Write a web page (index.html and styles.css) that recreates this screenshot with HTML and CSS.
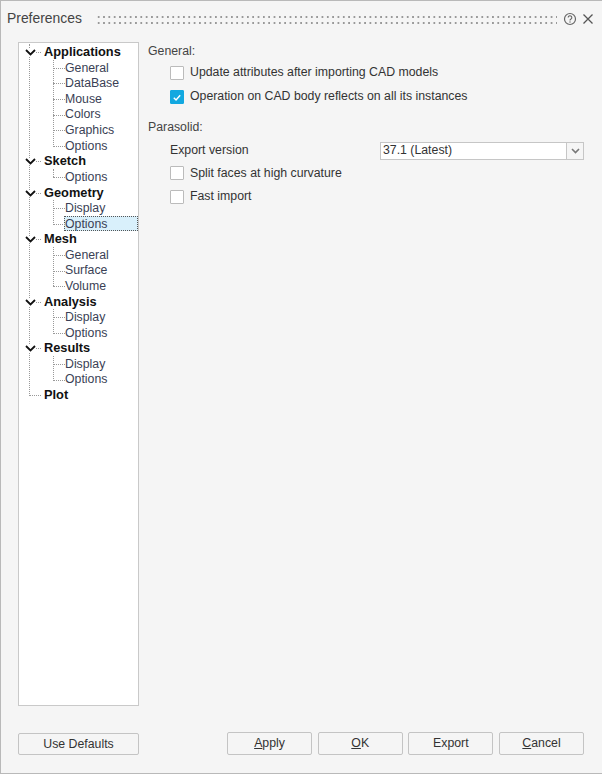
FILE: index.html
```html
<!DOCTYPE html>
<html lang="en">
<head>
<meta charset="utf-8">
<title>Preferences</title>
<link rel="stylesheet" href="styles.css">
</head>
<body>
<div class="dialog">
  <header class="titlebar">
    <span class="title">Preferences</span>
    <span class="grip"></span>
    <svg class="help" width="14" height="14" viewBox="0 0 14 14" aria-hidden="true"><circle cx="7" cy="7" r="5.5" fill="none" stroke="#666" stroke-width="1.2"/><path d="M5.2 5.6a1.8 1.8 0 1 1 2.8 1.5c-.7.4-1 .8-1 1.5" fill="none" stroke="#666" stroke-width="1.1"/><rect x="6.4" y="9.4" width="1.2" height="1.2" fill="#666"/></svg>
    <svg class="close" width="12" height="12" viewBox="0 0 12 12" aria-hidden="true"><path d="M1.5 1.5l9 9M10.5 1.5l-9 9" stroke="#555" stroke-width="1.3" fill="none"/></svg>
  </header>
  <div class="main">
    <nav class="tree">
      <ul class="roots">
        <li class="root"><svg class="chev" width="11" height="7" viewBox="0 0 11 7"><path d="M1 1l4.500 4.500L10 1" fill="none" stroke="#111" stroke-width="1.8"/></svg><span class="root-label">Applications</span>
          <ul class="kids">
            <li class="kid"><span class="kid-label">General</span></li>
            <li class="kid"><span class="kid-label">DataBase</span></li>
            <li class="kid"><span class="kid-label">Mouse</span></li>
            <li class="kid"><span class="kid-label">Colors</span></li>
            <li class="kid"><span class="kid-label">Graphics</span></li>
            <li class="kid"><span class="kid-label">Options</span></li>
          </ul>
        </li>
        <li class="root"><svg class="chev" width="11" height="7" viewBox="0 0 11 7"><path d="M1 1l4.500 4.500L10 1" fill="none" stroke="#111" stroke-width="1.8"/></svg><span class="root-label">Sketch</span>
          <ul class="kids">
            <li class="kid"><span class="kid-label">Options</span></li>
          </ul>
        </li>
        <li class="root"><svg class="chev" width="11" height="7" viewBox="0 0 11 7"><path d="M1 1l4.500 4.500L10 1" fill="none" stroke="#111" stroke-width="1.8"/></svg><span class="root-label">Geometry</span>
          <ul class="kids">
            <li class="kid"><span class="kid-label">Display</span></li>
            <li class="kid selected"><span class="kid-label">Options</span></li>
          </ul>
        </li>
        <li class="root"><svg class="chev" width="11" height="7" viewBox="0 0 11 7"><path d="M1 1l4.500 4.500L10 1" fill="none" stroke="#111" stroke-width="1.8"/></svg><span class="root-label">Mesh</span>
          <ul class="kids">
            <li class="kid"><span class="kid-label">General</span></li>
            <li class="kid"><span class="kid-label">Surface</span></li>
            <li class="kid"><span class="kid-label">Volume</span></li>
          </ul>
        </li>
        <li class="root"><svg class="chev" width="11" height="7" viewBox="0 0 11 7"><path d="M1 1l4.500 4.500L10 1" fill="none" stroke="#111" stroke-width="1.8"/></svg><span class="root-label">Analysis</span>
          <ul class="kids">
            <li class="kid"><span class="kid-label">Display</span></li>
            <li class="kid"><span class="kid-label">Options</span></li>
          </ul>
        </li>
        <li class="root"><svg class="chev" width="11" height="7" viewBox="0 0 11 7"><path d="M1 1l4.500 4.500L10 1" fill="none" stroke="#111" stroke-width="1.8"/></svg><span class="root-label">Results</span>
          <ul class="kids">
            <li class="kid"><span class="kid-label">Display</span></li>
            <li class="kid"><span class="kid-label">Options</span></li>
          </ul>
        </li>
        <li class="root leaf"><span class="root-label">Plot</span></li>
      </ul>
    </nav>
    <section class="panel">
      <h2 class="group-title">General:</h2>
      <div class="group-body">
        <label class="check"><span class="box"></span>Update attributes after importing CAD models</label>
        <label class="check"><span class="box on"><svg width="15" height="15" viewBox="0 0 15 15"><path d="M3.500 7.800l2.800 2.700 5.200-5.800" fill="none" stroke="#fff" stroke-width="1.800"/></svg></span>Operation on CAD body reflects on all its instances</label>
      </div>
      <h2 class="group-title second">Parasolid:</h2>
      <div class="group-body">
        <div class="field">
          <span class="field-label">Export version</span>
          <div class="combo"><span class="combo-value">37.1 (Latest)</span><span class="combo-btn"><svg width="9" height="6" viewBox="0 0 9 6"><path d="M1 1l3.500 3.500L8 1" fill="none" stroke="#777" stroke-width="1.600"/></svg></span></div>
        </div>
        <label class="check tight"><span class="box"></span>Split faces at high curvature</label>
        <label class="check tight"><span class="box"></span>Fast import</label>
      </div>
    </section>
  </div>
  <footer class="actions">
    <button class="btn defaults" type="button">Use Defaults</button>
    <div class="actions-right">
      <button class="btn" type="button"><u>A</u>pply</button>
      <button class="btn" type="button"><u>O</u>K</button>
      <button class="btn" type="button">Export</button>
      <button class="btn" type="button"><u>C</u>ancel</button>
    </div>
  </footer>
</div>
</body>
</html>
```
FILE: styles.css
```css
* { box-sizing: border-box; }
html, body { margin: 0; height: 100%; }
body { font: 12.300px/15.600px "Liberation Sans", Arial, sans-serif; color: #333; background: #f5f5f5; }
ul { list-style: none; margin: 0; padding: 0; }
.dialog { width: 602px; height: 774px; display: flex; flex-direction: column; border: 1px solid #b9b9b9; border-right: 0; background: #f5f5f5; }
.titlebar { height: 32px; flex: none; display: flex; align-items: center; padding: 4px 8px 0 6px; }
.title { font-size: 13.900px; color: #444; width: 89px; }
.grip { width: 461px; height: 12px; margin-top: 2px; background-image: radial-gradient(circle, #999 1px, transparent 1.400px); background-size: 5.330px 6px; background-position: 0 0; }
.help { margin-left: 6px; }
.close { margin-left: 5px; }
.main { flex: 1; min-height: 0; display: flex; padding: 9px 0 0 17px; }
.tree { width: 121px; height: 664px; flex: none; background: #fff; border: 1px solid #c9c9c9; padding: 1.200px 0 0 12px; overflow: hidden; }
.roots { position: relative; }
.roots::before { content: ""; position: absolute; left: -2px; top: 0; height: 352px; border-left: 1px dotted #999; }
.root { position: relative; }
.root::before { content: ""; position: absolute; left: -2px; top: 8px; width: 12px; border-top: 1px dotted #999; }
.chev { position: absolute; left: -6px; top: 5px; z-index: 1; background: #fff; }
.root-label { display: block; padding-left: 13px; font-size: 12.800px; font-weight: bold; color: #111; position: relative; }
.kids { position: relative; margin-left: 22px; }
.kids::before { content: ""; position: absolute; left: 0; top: 0; bottom: 8px; border-left: 1px dotted #999; }
.kid { position: relative; padding-left: 12px; color: #3a3f55; }
.kid::before { content: ""; position: absolute; left: 0; top: 8px; width: 12px; border-top: 1px dotted #999; }
.kid-label { display: block; height: 15.600px; padding-top: 0.800px; }
.selected .kid-label { margin-left: -1px; width: 74px; padding-left: 1px; background: #d9f0fb; outline: 1px dotted #555; outline-offset: -1px; }
.panel { flex: 1; padding: 1.500px 18px 0 9px; }
.group-title { margin: 0; font: inherit; color: #444; }
.group-title.second { margin-top: 11px; }
.group-body { padding-left: 22px; }
.check { display: flex; align-items: center; gap: 6px; height: 24px; color: #333; }
.check.tight { height: 23.500px; }
.check:first-child { margin-top: 2px; }
.box { width: 14px; height: 14px; flex: none; border: 1px solid #bbb; background: #fff; border-radius: 1px; display: flex; align-items: center; justify-content: center; }
.box.on { background: #12a8e0; border-color: #12a8e0; }
.field { display: flex; align-items: center; justify-content: space-between; height: 22px; margin-top: 4px; }
.combo { display: flex; width: 204px; height: 18px; background: #fff; border: 1px solid #c6c6c6; }
.combo-value { flex: 1; padding: 0 0 0 2px; color: #333; }
.combo-btn { width: 17px; background: #f5f5f5; border-left: 1px solid #c6c6c6; display: flex; align-items: center; justify-content: center; }
.actions { flex: none; height: 68px; display: flex; justify-content: space-between; padding: 27px 18px 0 17px; align-items: flex-start; }
.actions-right { display: flex; gap: 5.670px; }
.btn { width: 85px; height: 23px; padding: 1px 0 0; background: #f5f5f5; border: 1px solid #c4c4c4; border-radius: 2px; font: inherit; color: #333; }
.defaults { width: 121px; height: 22px; margin-top: 1px; }
```
